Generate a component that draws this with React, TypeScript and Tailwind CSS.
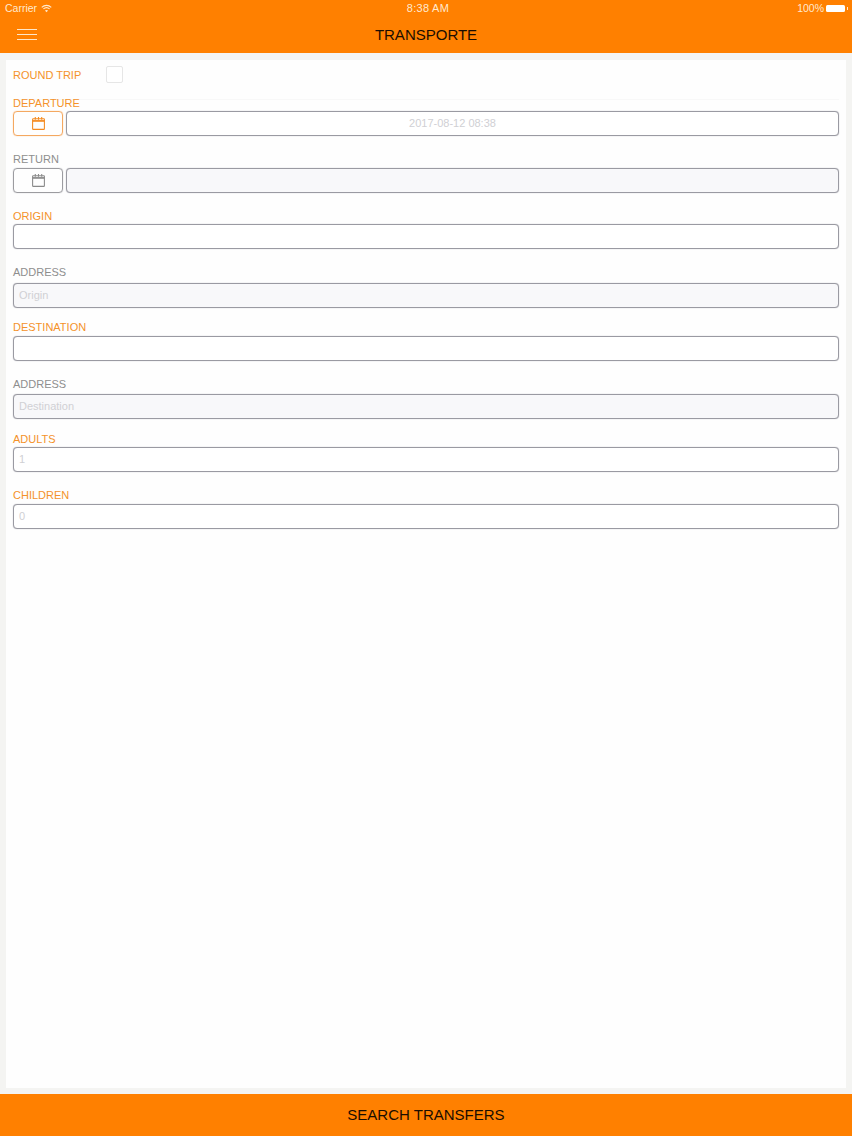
const FONT = "font-['Liberation_Sans',Arial,sans-serif]";

function CalendarIcon({ className }: { className: string }) {
  return (
    <svg className={className} viewBox="0 0 14 14" fill="none" stroke="currentColor" strokeWidth={1}>
      <rect x="1.5" y="2.5" width="11" height="10" rx=".6" />
      <path d="M1.5 4.6h11" strokeWidth={1.6} />
      <path d="M4 1v2.5M7 1v2.5M10 1v2.5" />
    </svg>
  );
}

function StatusBar() {
  return (
    <div className="flex h-4 items-center justify-between pl-[5px] pr-[4px] pt-px text-[10.5px] leading-none text-[#ffe9cf]">
      <div className="flex w-[200px] items-center gap-[4px]">
        <span>Carrier</span>
        <svg className="h-[9px] w-[11px]" viewBox="0 0 12 9" fill="none" stroke="currentColor" strokeWidth={1.2}>
          <path d="M.8 3.2C3.8.4 8.2.4 11.2 3.2" />
          <path d="M2.6 5C4.6 3.2 7.4 3.2 9.4 5" />
          <path d="M6 8.6 4.3 6.7C5.3 5.9 6.7 5.9 7.7 6.7Z" fill="currentColor" stroke="none" />
        </svg>
      </div>
      <span className="pl-[3px] text-[11px] tracking-[0.3px]">8:38 AM</span>
      <div className="flex w-[200px] items-center justify-end gap-[2px]">
        <span>100%</span>
        <span className="h-[7px] w-[19px] rounded-[1.5px] bg-white" />
        <span className="h-[3px] w-px bg-[#ffe9cf]" />
      </div>
    </div>
  );
}

function Header() {
  return (
    <header className="h-[53px] shrink-0 bg-[#ff8000]">
      <StatusBar />
      <div className="relative flex h-[37px] items-center justify-center text-[15px] leading-none text-[#1b0d00]">
        <div className="absolute left-[17px] top-[13px] flex w-5 flex-col gap-[4px]">
          <span className="h-px bg-[#ffe6c8]" />
          <span className="h-px bg-[#ffe6c8]" />
          <span className="h-px bg-[#ffe6c8]" />
        </div>
        <span>TRANSPORTE</span>
      </div>
    </header>
  );
}

function Label({ text, active, className }: { text: string; active?: boolean; className: string }) {
  return (
    <div className={`h-[14px] text-[11px] leading-[14px] ${active ? "text-[#f4922a]" : "text-[#8e8e8e]"} ${className}`}>
      {text}
    </div>
  );
}

function Box({ text, gray, center }: { text?: string; gray?: boolean; center?: boolean }) {
  return (
    <div
      className={`flex h-[25px] flex-1 items-center rounded-[4px] border border-[#9a9aa2] px-[5px] text-[11px] text-[#d0d0d4] shadow-[0_0_1px_#a6a6ae] ${
        gray ? "bg-[#f8f8fa]" : "bg-white"
      } ${center ? "justify-center" : ""}`}
    >
      {text}
    </div>
  );
}

function DateButton({ active }: { active?: boolean }) {
  return (
    <div
      className={`flex h-[25px] w-[50px] items-center justify-center rounded-[4px] border ${
        active ? "border-[#f4a860] text-[#f58a1f] shadow-[0_0_1px_#f4a860]" : "border-[#9c9ca0] text-[#8a8a8a] shadow-[0_0_1px_#a6a6ae]"
      }`}
    >
      <CalendarIcon className="h-[15px] w-[15px]" />
    </div>
  );
}

export default function App() {
  return (
    <div className={`flex h-[1136px] w-[852px] flex-col overflow-hidden bg-[#f4f4f2] ${FONT}`}>
      <Header />
      <main className="mx-[6px] mt-[7px] mb-[6px] flex-1 bg-[#fefefe] px-[7px]">
        <div className="flex h-[40px] items-start border-b border-[#f8f8f8] pt-[6px]">
          <div className="h-[18px] w-[93px] text-[11px] leading-[18px] text-[#f4922a]">ROUND TRIP</div>
          <div className="h-[17px] w-[17px] rounded-[2px] border border-[#e6e6e6] bg-white" />
        </div>

        <Label text="DEPARTURE" active className="mt-[-4px] mb-[1px]" />
        <div className="flex gap-[3px]">
          <DateButton active />
          <Box text="2017-08-12 08:38" center />
        </div>

        <Label text="RETURN" className="mt-[16px] mb-[2px]" />
        <div className="flex gap-[3px]">
          <DateButton />
          <Box gray />
        </div>

        <Label text="ORIGIN" active className="mt-[16px] mb-[1px]" />
        <div className="flex">
          <Box />
        </div>

        <Label text="ADDRESS" className="mt-[16px] mb-[4px]" />
        <div className="flex">
          <Box text="Origin" gray />
        </div>

        <Label text="DESTINATION" active className="mt-[12px] mb-[2px]" />
        <div className="flex">
          <Box />
        </div>

        <Label text="ADDRESS" className="mt-[16px] mb-[3px]" />
        <div className="flex">
          <Box text="Destination" gray />
        </div>

        <Label text="ADULTS" active className="mt-[13px] mb-[1px]" />
        <div className="flex">
          <Box text="1" />
        </div>

        <Label text="CHILDREN" active className="mt-[16px] mb-[2px]" />
        <div className="flex">
          <Box text="0" />
        </div>
      </main>
      <button className="flex h-[42px] shrink-0 items-center justify-center bg-[#ff8000] text-[15px] text-[#1b0d00]">
        SEARCH TRANSFERS
      </button>
    </div>
  );
}
